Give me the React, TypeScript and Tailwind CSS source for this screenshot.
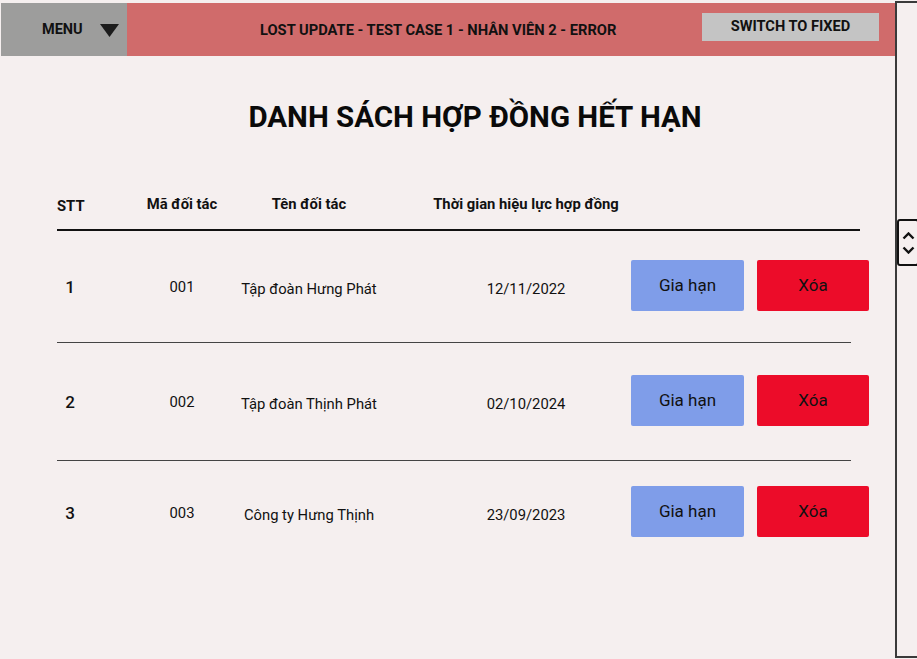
const rows = [
  { stt: "1", code: "001", name: "Tập đoàn Hưng Phát", date: "12/11/2022", top: "mt-[29px]", after: "mt-[31px]" },
  { stt: "2", code: "002", name: "Tập đoàn Thịnh Phát", date: "02/10/2024", top: "mt-[32px]", after: "mt-[34px]" },
  { stt: "3", code: "003", name: "Công ty Hưng Thịnh", date: "23/09/2023", top: "mt-[25px]", after: "" },
];

const Header = () => (
  <div className="mt-[3px] h-[53px] flex">
    <div className="w-[126px] ml-[1px] bg-[#9d9d9c] flex items-center">
      <span className="ml-[41px] text-[14.5px] font-bold text-[#111]">MENU</span>
      <svg className="ml-[17px] mt-[2px]" width="19" height="13" viewBox="0 0 19 13">
        <polygon points="0,0 19,0 9.5,13" fill="#1c1c1c" />
      </svg>
    </div>
    <div className="flex-1 bg-[#d06b6b] flex">
      <div className="ml-[133px] self-center mt-[1px] text-[14.7px] font-bold text-[#111] whitespace-nowrap">
        LOST UPDATE - TEST CASE 1 - NHÂN VIÊN 2 - ERROR
      </div>
      <button className="ml-auto mr-[16px] mt-[10px] w-[177px] h-[28px] bg-[#c4c4c4] text-[14.6px] font-bold text-[#111] flex items-center justify-center pb-[1px]">
        SWITCH TO FIXED
      </button>
    </div>
  </div>
);

const Row = ({ r }: { r: (typeof rows)[number] }) => (
  <div className={`${r.top} pl-[57px] flex items-center h-[51px] text-[#111]`}>
    <div className="w-[26px] text-center text-[17px] font-medium mt-[4px]">{r.stt}</div>
    <div className="ml-[49px] w-[100px] text-center text-[14.8px] pt-[4px]">{r.code}</div>
    <div className="w-[154px] text-center text-[14.8px] pt-[7px] whitespace-nowrap">{r.name}</div>
    <div className="ml-[44px] w-[192px] text-center text-[14.8px] pt-[7px]">{r.date}</div>
    <button className="ml-[9px] w-[113px] h-[51px] rounded-[2px] bg-[#7f9de9] text-[17px] text-[#111]">Gia hạn</button>
    <button className="ml-[13px] w-[112px] h-[51px] rounded-[2px] bg-[#ec0c29] text-[17px] text-[#111]">Xóa</button>
  </div>
);

export default function App() {
  return (
    <div className="w-[917px] h-[659px] bg-[#f5efef] flex overflow-hidden" style={{ fontFamily: "Roboto, 'Noto Sans', sans-serif" }}>
      <div className="w-[895px] flex flex-col">
        <Header />
        <h1 className="mt-[43px] text-center text-[29.5px] leading-[36px] font-bold text-[#0a0a0a] pl-[55px]">
          DANH SÁCH HỢP ĐỒNG HẾT HẠN
        </h1>
        <div className="mt-[59px] h-[20px] pl-[57px] flex items-center text-[14.8px] font-bold text-[#111]">
          <div className="w-[26px] text-center mt-[4px]">STT</div>
          <div className="ml-[49px] w-[100px] text-center">Mã đối tác</div>
          <div className="w-[154px] text-center">Tên đối tác</div>
          <div className="ml-[44px] w-[192px] text-center whitespace-nowrap">Thời gian hiệu lực hợp đồng</div>
        </div>
        <div className="mt-[15px] ml-[57px] w-[803px] h-[2px] bg-[#111]" />
        {rows.map((r, i) => (
          <div key={r.stt}>
            <Row r={r} />
            {i < rows.length - 1 && <div className={`${r.after} ml-[57px] w-[794px] h-[1px] bg-[#444]`} />}
          </div>
        ))}
      </div>
      <div className="flex-1 mt-[1px] mb-[1px] border-l-2 border-t-2 border-b-2 border-[#3a3a3a] relative">
        <div className="absolute left-0 top-[216px] w-[22px] h-[47px] border-2 border-[#111] rounded-[3px] flex flex-col items-center justify-center gap-[6px]">
          <svg width="13" height="8" viewBox="0 0 13 8">
            <polyline points="1.5,6.5 6.5,1.5 11.5,6.5" fill="none" stroke="#111" strokeWidth="2.4" />
          </svg>
          <svg width="13" height="8" viewBox="0 0 13 8">
            <polyline points="1.5,1.5 6.5,6.5 11.5,1.5" fill="none" stroke="#111" strokeWidth="2.4" />
          </svg>
        </div>
      </div>
    </div>
  );
}
